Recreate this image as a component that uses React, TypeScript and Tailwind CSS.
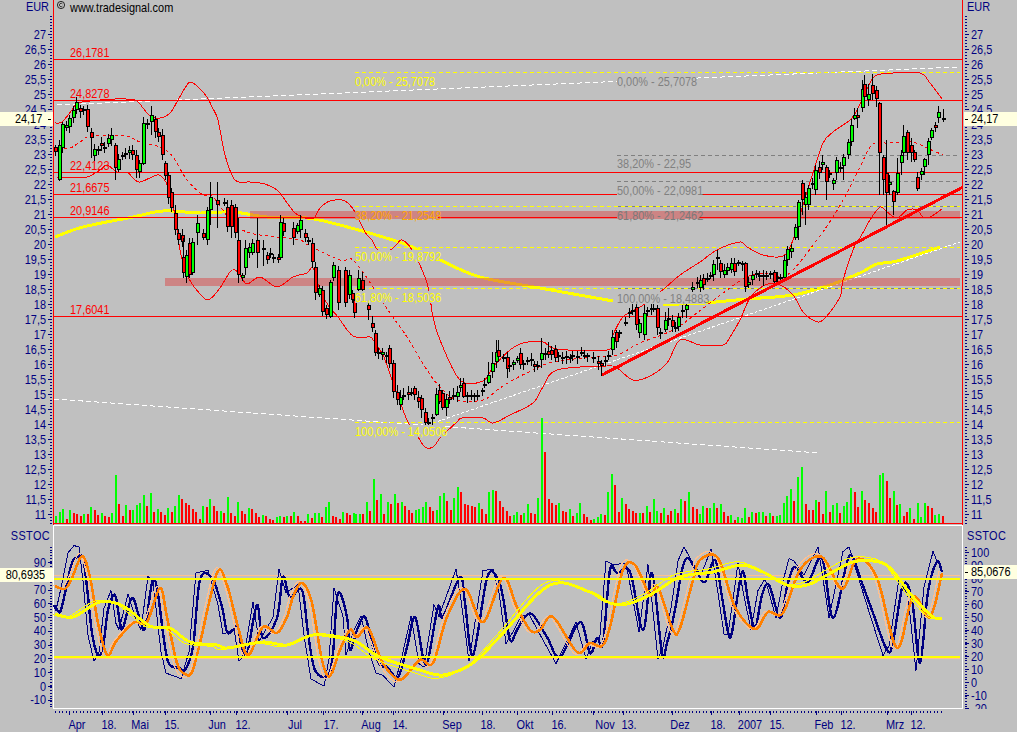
import React from "react";

const NAVY = "#000080";
const RED = "#ff0000";

// px position on the page, traced as x,y,x,y...
const upperBand = [55,123,62,122,72,110,78,103,100,100,115,99,135,100,143,108,150,116,160,118,170,113,178,100,185,88,190,82,197,86,207,97,212,107,218,120,225,155,235,180,250,182,265,184,277,190,285,200,295,213,305,218,314,218,320,208,330,201,345,201,355,212,365,232,372,240,378,250,390,250,397,244,402,240,412,250,427,283,433,317,440,340,460,380,483,381,493,367,510,350,523,343,543,342,557,349,607,350,612,337,623,317,640,307,646,303,665,288,680,275,700,262,717,250,740,242,747,247,763,255,783,256,793,240,803,205,813,173,823,143,833,132,850,120,857,110,870,83,877,75,893,73,920,73,930,83,942,99];
const lowerBand = [57,177,72,177,87,177,100,170,107,165,117,172,128,173,133,178,140,182,157,175,163,178,168,187,175,215,180,250,188,277,203,297,210,299,220,288,230,272,235,270,240,275,247,284,260,277,277,287,293,277,307,273,313,268,320,290,328,305,338,317,353,336,370,337,373,340,383,355,392,380,403,410,408,422,418,437,425,447,433,447,440,438,445,433,457,422,462,418,483,418,493,423,510,415,533,403,543,387,557,370,607,366,617,368,633,380,650,376,667,363,680,340,700,345,723,345,730,337,740,320,750,298,765,285,778,284,793,295,803,312,813,320,823,320,840,297,843,280,855,245,860,238,870,220,880,207,887,212,897,218,907,210,917,210,923,217,930,217,942,209];
const midBand = [58,148,70,148,80,142,90,136,110,136,127,136,140,142,160,147,173,157,187,180,203,195,213,197,233,223,250,233,277,237,300,240,308,245,340,260,353,260,373,287,390,313,407,337,427,370,440,387,457,400,483,400,497,390,513,380,533,370,553,362,593,357,617,355,640,343,673,330,697,313,723,293,747,277,767,273,780,277,793,270,817,240,833,217,847,193,860,167,870,147,877,143,887,143,900,142,913,142,927,148,943,155];
const maLine = [55,237,83,227,133,217,163,211,200,213,233,212,267,217,307,218,340,225,393,240,417,249,440,260,480,277,540,288,613,301];
const maLine2 = [663,304,680,304,705,303,747,299,793,295,830,285,860,273,877,264,897,261,940,247];

const navyThick = [55,605,60,612,65,593,72,563,78,557,83,558,87,587,92,633,98,655,103,647,108,610,115,595,120,623,123,628,132,598,140,620,145,628,152,583,157,588,165,647,170,665,180,668,185,670,193,647,200,580,212,578,222,607,227,632,233,630,238,627,243,655,248,650,257,605,263,638,277,618,283,577,290,597,302,590,308,633,315,670,328,676,333,653,338,593,347,617,350,650,357,630,365,617,373,647,380,665,387,667,398,677,407,647,415,617,423,657,428,660,438,607,443,617,460,577,465,603,473,655,487,578,497,577,503,597,510,640,517,630,525,617,533,615,547,637,560,657,580,622,590,653,597,638,603,643,610,570,617,573,630,572,643,630,652,573,662,653,667,643,675,610,682,570,688,558,697,572,705,582,715,560,722,597,728,632,732,632,742,572,748,600,755,628,762,595,769,585,780,618,787,587,793,568,798,570,808,582,822,558,833,618,847,562,853,558,862,583,873,613,887,650,893,642,903,585,912,600,920,663,928,592,937,562,942,572];
const orangeThick = [55,586,65,589,72,578,82,556,90,577,98,623,107,655,115,643,123,633,135,622,147,622,160,588,167,617,177,663,185,674,192,672,200,643,217,573,227,585,238,627,248,655,263,627,277,633,287,617,293,597,302,583,312,603,322,660,330,676,340,650,350,630,357,637,368,628,380,657,390,673,402,679,420,660,433,663,447,617,465,589,483,622,503,578,517,607,530,630,540,630,553,617,577,652,590,643,602,646,610,627,623,570,635,565,650,595,658,587,673,630,680,628,693,580,700,560,718,558,735,607,755,629,768,612,783,613,800,570,822,557,842,589,857,559,877,578,897,648,913,597,930,617,942,573];
const yellowThick = [55,614,73,617,100,602,123,606,150,626,170,628,190,642,217,645,227,648,263,642,287,645,313,635,340,637,357,642,380,657,420,670,443,675,473,663,503,633,550,585,590,592,610,603,627,604,650,595,680,577,713,572,742,565,763,572,787,585,807,585,827,575,853,562,873,561,890,568,913,597,933,617,942,618];

// x, body top, body bottom, 1 green / 0 red, optional wick top, wick bottom
type Candle = [number, number, number, number, number?, number?];
const candles: Candle[] = [
  [55,147,152,0],[59,145,180,1,140,181],[62,124,148,1],[66,125,128,1],[69,118,127,1],[73,110,118,1],[76,102,110,1],[80,108,112,0],[83,109,111,0],[87,109,127,0],[91,132,138,0,128,158],[94,149,156,1],[98,149,151,1],[101,143,146,0],[104,147,149,1],[108,138,144,1],[111,135,140,1,128,146],
  [115,145,168,0,143,180],[118,159,170,1],[122,155,157,0],[125,153,155,1],[129,150,153,1],[132,150,155,0],[136,155,170,0,150,178],[139,163,172,1,160,178],[143,123,164,1,117,165],[147,123,125,0],[151,115,122,1,106,135],[155,119,132,0],[158,132,137,0,128,142],[162,135,155,0],[165,163,176,0,161,180],[168,175,198,0],[171,192,208,0],[175,213,230,0,205,235],[178,233,240,0],[182,235,242,0],[183,257,273,0,238,278],[186,255,277,1,250,283],[189,243,275,0],[192,242,273,1,238,275],
  [197,223,233,1,215,245],[203,233,238,0],[207,210,240,1],[210,197,210,1,182,225],[217,200,205,0,182,228],[224,202,204,1,198,206],[227,207,227,0,200,232],[231,205,227,0,200,238],[235,207,233,0,204,238],[238,240,275,0,218,283],[242,275,278,1],[245,248,268,1,240,275],[249,247,253,1],[252,243,253,1],[257,240,253,0,218,268],[263,248,250,0,240,266],[267,255,260,0],[270,253,255,0,248,258],[273,257,259,1],[278,257,260,0],[280,222,258,1,215,260],[283,223,232,0],[293,228,238,0,222,245],[297,225,232,1],[300,220,230,1,215,238],[305,233,238,0],[308,240,242,0],[312,243,262,0,238,268],[315,267,293,0,262,300],[319,288,295,1],[322,290,312,0,286,316],[326,308,315,0],[330,282,317,1,280,318],[333,265,278,1],[338,270,303,0,266,310],
  [345,270,303,0],[349,275,295,1],[352,293,300,0],[354,300,313,0,296,318],[358,278,290,1,270,292],[362,280,290,0,272,294],[368,305,310,0,300,320],[372,323,328,0,316,332],[375,333,353,0,330,356],[378,352,354,1],[382,352,355,1],[386,355,357,0],[389,348,364,0,345,368],[393,363,392,0,360,398],[397,392,400,0,385,405],[400,397,405,1,390,410],[403,395,397,1,388,400],[408,392,395,0,386,400],[411,392,394,0,388,396],[414,388,395,0,386,400],[418,397,402,0],[421,398,410,0,395,418],[425,412,423,0,408,428],[428,422,424,1],[432,417,419,0],[436,394,415,1,388,416],[439,390,402,0,384,404],[442,393,408,0],[446,399,408,1,394,416],[449,397,400,0],[453,395,397,1,388,400],[457,392,397,1,386,402],[460,385,388,1,378,392],[463,383,397,0,378,398],[467,395,397,0],[471,395,397,1,390,400],[474,395,397,0],[477,395,397,1,390,400],[482,390,392,0,388,396],[484,384,386,1,378,388],
  [488,375,383,1,362,384],[492,363,372,1,352,378],[496,352,362,1,340,368],[498,350,357,0,340,360],[503,357,359,1],[507,357,369,0,352,378],[509,365,367,1],[513,362,365,1],[517,358,361,1],[520,353,365,0],[523,363,365,0],[527,360,362,1],[531,359,361,1],[534,364,367,0],[537,365,367,1],[541,353,360,1,338,368],[545,353,355,1],[548,351,355,0,342,358],[551,350,355,0],[555,349,358,0,345,362],[558,355,357,1],[562,357,359,0],[566,356,358,1],[570,357,359,0],[572,355,357,1],[577,356,358,1],[581,352,354,0],[584,355,357,0],[587,355,357,0],[593,357,359,1],[598,361,364,0],[601,363,366,0,360,376],[605,360,362,1],[608,355,357,1],[612,337,350,1,330,355],[616,332,342,0],[619,332,334,1],[625,322,324,0],[629,312,314,1],[632,310,312,0],[636,307,325,0,303,330],[639,323,333,1],[644,313,335,1,305,340],[647,310,312,0],[651,308,310,1],[653,308,310,1],[657,308,328,0,305,335],[660,332,334,0],[665,320,330,1,312,332],[668,318,320,0,308,326],[672,320,327,0],[675,327,329,1],[678,317,327,1],
  [682,310,312,0],[686,305,310,1,300,318],[692,287,290,1],[697,282,284,0],[700,280,288,1],[703,278,285,0],[707,278,280,1],[710,275,277,0],[713,264,275,1],[717,257,259,0,250,270],[720,263,272,0,260,278],[724,270,275,1],[727,267,271,1],[731,263,270,1],[734,263,272,0],[738,262,264,1],[742,263,265,1],[745,263,287,0,262,292],[748,282,285,1],[752,275,280,1],[756,273,275,0],[759,275,277,1],[763,275,277,0,270,286],[766,275,277,1],[770,273,275,0],[774,272,282,0,270,285],[777,277,279,0],[780,277,279,0],[784,260,278,1],[787,249,260,1],[791,248,252,1],[795,227,238,1,224,240],[798,202,227,1,200,240],[802,183,200,0,180,215],[805,197,205,1,192,225],[808,188,205,1,185,210],[812,183,185,0],[815,170,190,1,165,195],[819,167,173,0],[822,162,165,1,155,170],[826,167,182,0,165,200],[829,173,175,0],[833,180,184,1,178,190],[836,160,173,1,157,180],[840,167,169,1],[843,157,166,1,154,180],[848,142,155,1],[851,125,142,1],[854,115,119,1,108,120],[857,115,118,0,108,128],[862,89,108,1,80,112],[864,84,97,0,75,105],[868,94,100,1,84,106],[872,85,94,0,74,100],[876,90,99,0,86,107],[879,103,153,0,102,195],[883,157,180,0,155,195],[886,173,193,0,140,225],[889,182,185,1,175,195],[893,191,202,0,190,215],[897,173,193,1,158,195],[901,155,163,1,150,175],[903,136,153,1,125,158],[907,132,153,0,130,160],[911,145,153,0,138,162],[914,152,160,0,150,162],[917,177,189,0,172,191],[921,171,175,1,168,180],[924,159,167,1,158,175],[928,141,155,1,138,165],[931,130,138,1,128,140],[935,125,128,0,122,132],[938,112,118,1,106,123],[943,118,119,0,109,122],
];

// volume heights read off the crops, in crop units (3 = 1px); negative is a red bar
const volA = [21,33,42,-12,39,-30,-27,-21,27,-27,48,-39,-24,30,-21,-18,30,144,-57,-21,54,-39,39,54,60,84,-51,90,-33,42,-33,-24,45,-33,51,84,-72,-60,-54,-42,-33,-12,51,-48,72,-51,-36,36,-30,78,-30,-21,63,-36,-27,45,-42,-30,-18,24,-21,-12,-9,18,21,-18,21,-21,33,-21,-6,-6,27,-15,30,30,-18,48,63,-21,-18,-12,33,-30,-24,30];
const volB = [27,27,-27,63,-36,132,-69,87,-27,63,-57,87,-60,63,-51,-39,-30,39,42,48,63,-48,-36,39,81,90,-66,-39,75,108,-93,-57,-54,-51,-48,60,-42,-27,93,99,-96,-66,-48,-36,-21,24,33,-24,30,57,-30,-27,75,315,-213,-72,-60,-54,60,-36,-33,42,-21,30,60,-27,-18,-9,12,18,27,-24,93,147,-114,-33,75,-57,-42,-36,-30,30,-30,51,-33,72];
// crop x (from 680), height in px
const volC: [number, number][] = [[0,24],[13,-22],[25,31],[36,-16],[47,-14],[57,9],[67,17],[77,-15],[88,15],[98,20],[108,-15],[119,19],[130,-11],[140,-7],[150,8],[161,-3],[171,6],[182,5],[192,15],[203,-6],[213,11],[224,-10],[234,11],[245,11],[256,-7],[266,10],[277,-7],[287,7],[297,8],[308,20],[318,27],[330,34],[340,-22],[352,46],[362,56],[374,-19],[385,-13],[395,-13],[404,23],[415,-21],[426,-9],[436,32],[447,-11],[457,18],[467,20],[478,-10],[488,17],[498,21],[510,35],[522,-31],[532,-16],[543,32],[553,-23],[563,-20],[575,-15],[586,-11],[597,48],[607,50],[618,-42],[628,-25],[638,32],[648,-18],[658,19],[668,-7],[678,-11],[688,15],[699,-4],[710,20],[720,6],[732,20],[742,-17],[753,-15],[763,8],[773,9],[785,-7]];
const bars = [
  ...volA.map((h, i) => ({ x: 55 + i * 3.5, h: h / 3 })),
  ...volB.map((h, i) => ({ x: 355 + i * 3.5, h: h / 3 })),
  ...[12, -10, 15, -8, -12, 14, -10].map((h, i) => ({ x: 656 + i * 3.5, h })),
  ...volC.map(([z, h]) => ({ x: 680 + z / 3, h })),
];

const hash = (i: number) => {
  const s = Math.sin(i * 12.9898) * 43758.5453;
  return s - Math.floor(s);
};

const points = (p: number[], dx: number, gain: number, mid: number) => {
  const pts: [number, number][] = [];
  for (let i = 0; i < p.length; i += 2) pts.push([p[i] + dx, mid + (p[i + 1] - mid) * gain]);
  return pts;
};

// catmull-rom through the traced points
const curve = (p: number[], dx = 0, gain = 1, mid = 620) => {
  const pts = points(p, dx, gain, mid);
  let d = `M${pts[0][0]} ${pts[0][1]}`;
  for (let i = 0; i < pts.length - 1; i++) {
    const a = pts[Math.max(i - 1, 0)];
    const b = pts[i];
    const c = pts[i + 1];
    const e = pts[Math.min(i + 2, pts.length - 1)];
    d += `C${b[0] + (c[0] - a[0]) / 6} ${b[1] + (c[1] - a[1]) / 6} ${c[0] - (e[0] - b[0]) / 6} ${c[1] - (e[1] - b[1]) / 6} ${c[0]} ${c[1]}`;
  }
  return d;
};

const jagged = (p: number[], dx = 0, gain = 1, mid = 620) =>
  points(p, dx, gain, mid)
    .map(([x, y], i) => `${i ? "L" : "M"}${x} ${y}`)
    .join("");

function Label({
  x,
  y,
  children,
  color = NAVY,
  anchor = "start",
  spacing,
}: {
  x: number;
  y: number;
  children: React.ReactNode;
  color?: string;
  anchor?: "start" | "end" | "middle";
  spacing?: number;
}) {
  return (
    <text
      transform={`translate(${x} ${y + 4.5}) scale(.875 1)`}
      textAnchor={anchor}
      fill={color}
      fontSize={12.5}
      letterSpacing={spacing}
    >
      {children}
    </text>
  );
}

// fib labels blank out whatever runs behind them
function FibLabel({ x, y, w, color, text, bg = "#c0c0c0" }: { x: number; y: number; w: number; color: string; text: string; bg?: string }) {
  return (
    <g>
      <rect x={x} y={bg === "#c0c0c0" ? y - 6 : y - 4} width={w} height={bg === "#c0c0c0" ? 12 : 8} fill={bg} />
      <Label x={x} y={y} color={color}>
        {text}
      </Label>
    </g>
  );
}

const priceTicks = Array.from({ length: 33 }, (_, i) => 27 - i * 0.5);
const fmt = (n: number) => String(n).replace(".", ",");

function PriceAxis({ side }: { side: "left" | "right" }) {
  const left = side === "left";
  const dots = Array.from({ length: 170 }, (_, i) => 16 + i * 3);
  return (
    <svg viewBox={left ? "0 0 53 525" : "963 0 54 525"} className="block w-full h-full">
      <g shapeRendering="crispEdges" fill={NAVY}>
        {dots.map((y) => (
          <rect key={y} x={left ? 50 : 965} y={y} width={2} height={1} />
        ))}
        {priceTicks.map((p) => (
          <rect key={p} x={left ? 48 : 965} y={34 + (27 - p) * 30} width={4} height={1} />
        ))}
      </g>
      <Label x={left ? 49 : 967} y={6.5} anchor={left ? "end" : "start"}>
        EUR
      </Label>
      {priceTicks.map((p) => (
        <Label key={p} x={left ? 46 : 971} y={34 + (27 - p) * 30} anchor={left ? "end" : "start"}>
          {fmt(p)}
        </Label>
      ))}
    </svg>
  );
}

function MainChart() {
  const hLines = [59, 100, 172, 194, 217, 316];
  const yellowFib = [72.5, 206.5, 247.5, 288.5, 422.5];
  const grayFib = [155.5, 181.5, 206.5, 288.5];
  return (
    <svg viewBox="53 0 910 525" className="block w-full h-full">
      <g shapeRendering="crispEdges">
        <path d="M57 105L960 67" stroke="#fff" strokeDasharray="5 3" fill="none" />
        <path d="M54 399L820 453" stroke="#fff" strokeDasharray="5 3" fill="none" />
        <path d="M433 423L960 242" stroke="#fff" strokeDasharray="3 2" fill="none" />
        <path d={curve(maLine, 0, 1, 0)} stroke="#ffff00" strokeWidth={3} fill="none" />
        <path d={curve(maLine2, 0, 1, 0)} stroke="#ffff00" strokeWidth={3} fill="none" />
        <rect x={250} y={211} width={710} height={8} fill="#da4848" fillOpacity={0.5} />
        <rect x={165} y={278} width={795} height={8} fill="#da4848" fillOpacity={0.5} />
        {grayFib.map((y) => (
          <path key={y} d={`M617 ${y}L960 ${y}`} stroke="#808080" strokeDasharray="4 3" />
        ))}
        {yellowFib.map((y) => (
          <path key={y} d={`M355 ${y}L960 ${y}`} stroke="#ffff00" strokeDasharray="4 3" />
        ))}
        {hLines.map((y) => (
          <rect key={y} x={53} y={y} width={910} height={1} fill={RED} />
        ))}
        <path d={curve(upperBand, 0, 1, 0)} stroke={RED} fill="none" />
        <path d={curve(lowerBand, 0, 1, 0)} stroke={RED} fill="none" />
        <path d={curve(midBand, 0, 1, 0)} stroke={RED} strokeDasharray="3 3" fill="none" />
        {bars.map((b) => {
          const h = Math.max(Math.round(Math.abs(b.h)), 1);
          return <rect key={b.x} x={Math.round(b.x)} y={523 - h} width={2} height={h} fill={b.h > 0 ? "#00ff00" : RED} />;
        })}
        <rect x={53} y={523} width={910} height={1} fill={RED} />
        {candles.map(([x, top, bottom, up, wt, wb], i) => {
          const hi = wt ?? top - 2 - Math.round(hash(i) * 4);
          const lo = wb ?? bottom + 2 + Math.round(hash(i + 9) * 4);
          return (
            <g key={x}>
              <rect x={x} y={hi} width={1} height={lo - hi} fill="#000" />
              <rect x={x - 1} y={top} width={4} height={Math.max(bottom - top, 2)} fill="#000" />
              {bottom - top > 2 && <rect x={x} y={top + 1} width={2} height={bottom - top - 2} fill={up ? "#00ff00" : RED} />}
            </g>
          );
        })}
        <path d="M602 375L963 187" stroke={RED} strokeWidth={3} />
        <rect x={53} y={0} width={1} height={525} fill={RED} />
        <rect x={962} y={0} width={1} height={525} fill={RED} />
      </g>

      <circle cx={61} cy={5} r={3.6} fill="none" stroke="#000" strokeWidth={0.8} />
      <path d="M62.4 3.9a1.7 1.7 0 1 0 0 2.2" fill="none" stroke="#000" strokeWidth={0.7} />
      <Label x={70} y={7} color="#000">
        www.tradesignal.com
      </Label>

      <Label x={70} y={52} color={RED}>26,1781</Label>
      <Label x={70} y={93} color={RED}>24,8278</Label>
      <Label x={70} y={165} color={RED}>22,4123</Label>
      <Label x={70} y={187} color={RED}>21,6675</Label>
      <Label x={70} y={210} color={RED}>20,9146</Label>
      <Label x={70} y={309} color={RED}>17,6041</Label>

      <FibLabel x={355} y={81} w={83} color="#ffff00" text="0,00% - 25,7078" />
      <FibLabel x={355} y={215} w={83} color="#ffa800" bg="#cd8484" text="38,20% - 21,2548" />
      <FibLabel x={355} y={256} w={84} color="#ffff00" text="50,00% - 19,8792" />
      <FibLabel x={355} y={297} w={84} color="#ffff00" text="61,80% - 18,5036" />
      <FibLabel x={355} y={431} w={90} color="#ffff00" text="100,00% - 14,0506" />

      <FibLabel x={617} y={81} w={78} color="#808080" text="0,00% - 25,7078" />
      <FibLabel x={617} y={163} w={72} color="#808080" text="38,20% - 22,95" />
      <FibLabel x={617} y={190} w={83} color="#808080" text="50,00% - 22,0981" />
      <FibLabel x={617} y={215} w={82} color="#7a7a7a" bg="#cd8484" text="61,80% - 21,2462" />
      <FibLabel x={617} y={298} w={89} color="#808080" text="100,00% - 18,4883" />
    </svg>
  );
}

function StochAxis({ side }: { side: "left" | "right" }) {
  const left = side === "left";
  const zero = left ? 686 : 682.3;
  const step = left ? 13.77 : 13;
  const vals = left ? [90, 80, 70, 60, 50, 40, 30, 20, 10, 0, -10] : [100, 90, 80, 70, 60, 50, 40, 30, 20, 10, 0, -10, -20];
  const dots = Array.from({ length: 60 }, (_, i) => 547 + i * 2.7);
  return (
    <svg viewBox={left ? "0 525 53 184" : "963 525 54 184"} className="block w-full h-full">
      <g shapeRendering="crispEdges" fill={NAVY}>
        {dots.map((y) => (
          <rect key={y} x={left ? 50 : 965} y={Math.round(y)} width={2} height={1} />
        ))}
        {vals.map((v) => (
          <rect key={v} x={left ? 48 : 965} y={Math.round(zero - v * (step / 10))} width={4} height={1} />
        ))}
      </g>
      <Label x={left ? 50 : 967} y={535} anchor={left ? "end" : "start"} spacing={0.4}>
        SSTOC
      </Label>
      {vals.map((v) => (
        <Label key={v} x={left ? 46 : 971} y={zero - v * (step / 10)} anchor={left ? "end" : "start"}>
          {v}
        </Label>
      ))}
    </svg>
  );
}

function StochChart() {
  return (
    <svg viewBox="53 525 910 184" className="block w-full h-full">
      <g shapeRendering="crispEdges" fill="none">
        <rect x={53} y={525} width={910} height={1} fill="#fff" />
        <rect x={53} y={708} width={910} height={1} fill="#fff" />
        <rect x={53} y={525} width={1} height={184} fill="#fff" />
        <rect x={962} y={525} width={1} height={184} fill="#fff" />
        <rect x={54} y={575} width={906} height={1} fill="#ffc090" />
        <rect x={54} y={658} width={906} height={1} fill="#ffc090" />
        <path d={jagged(navyThick, -4, 1.18)} stroke={NAVY} />
        <path d={curve(navyThick)} stroke={NAVY} strokeWidth={2.4} />
        <path d={curve(orangeThick, -3, 1.04)} stroke="#ffc090" strokeWidth={1.2} />
        <path d={curve(orangeThick)} stroke="#ff8000" strokeWidth={2.6} />
        <rect x={54} y={578} width={906} height={1.5} fill="#ffff00" />
        <rect x={54} y={656} width={906} height={1.5} fill="#ffff00" />
        <path d={curve(yellowThick, -5, 1.06)} stroke="#ffff00" />
        <path d={curve(yellowThick)} stroke="#ffff00" strokeWidth={3} />
      </g>
    </svg>
  );
}

const monthTicks = [69, 102, 133, 165, 210, 236, 287, 323, 362, 393, 443, 482, 517, 552, 593, 623, 672, 711, 739, 770, 816, 841, 887, 911];
const timeLabels: [string, number][] = [
  ["Apr", 77], ["18.", 109], ["Mai", 140], ["15.", 172], ["Jun", 217], ["12.", 243], ["Jul", 295], ["17.", 331],
  ["Aug", 371], ["14.", 400], ["Sep", 452], ["18.", 488], ["Okt", 525], ["16.", 559], ["Nov", 605], ["13.", 629],
  ["Dez", 680], ["18.", 718], ["2007", 750], ["15.", 777], ["Feb", 824], ["12.", 848], ["Mrz", 895], ["12.", 918],
];

function TimeAxis() {
  return (
    <svg viewBox="0 709 1017 23" className="block w-full h-full">
      <g shapeRendering="crispEdges" fill={NAVY}>
        {Array.from({ length: 254 }, (_, i) => 55 + i * 3.5).map((x) => (
          <rect key={x} x={Math.round(x)} y={711} width={1} height={2} />
        ))}
        {monthTicks.map((x) => (
          <rect key={x} x={x} y={711} width={1} height={4} />
        ))}
      </g>
      {timeLabels.map(([t, x]) => (
        <Label key={`${t}${x}`} x={x} y={724.5} anchor="middle">
          {t}
        </Label>
      ))}
    </svg>
  );
}

function ValueTag({ value, side, className }: { value: string; side: "left" | "right"; className: string }) {
  const left = side === "left";
  return (
    <div className={`absolute flex h-[14px] items-center bg-[#ffffe0] text-[12.5px] leading-none text-black ${className} ${left ? "left-0 w-[53px] justify-end pr-[2px]" : "right-0 w-[53px] justify-start pl-[1px]"}`}>
      {!left && <span className="mr-[3px] h-px w-[3px] bg-black" />}
      <span className={`inline-block scale-x-[.875] ${left ? "origin-right" : "origin-left"}`}>{value}</span>
      {left && <span className="ml-[6px] h-px w-[3px] bg-black" />}
    </div>
  );
}

export default function App() {
  return (
    <div className="flex h-[732px] w-[1017px] flex-col overflow-hidden bg-[#c0c0c0] font-['Liberation_Sans',Arial,sans-serif]">
      <div className="flex h-[525px]">
        <div className="relative w-[53px]">
          <PriceAxis side="left" />
          <ValueTag side="left" value="24,17" className="top-[112px]" />
        </div>
        <div className="w-[910px]">
          <MainChart />
        </div>
        <div className="relative w-[54px]">
          <PriceAxis side="right" />
          <ValueTag side="right" value="24,17" className="top-[112px]" />
        </div>
      </div>
      <div className="flex h-[184px]">
        <div className="relative w-[53px]">
          <StochAxis side="left" />
          <ValueTag side="left" value="80,6935" className="top-[43px]" />
        </div>
        <div className="w-[910px]">
          <StochChart />
        </div>
        <div className="relative w-[54px]">
          <StochAxis side="right" />
          <ValueTag side="right" value="85,0676" className="top-[40px]" />
        </div>
      </div>
      <div className="h-[23px]">
        <TimeAxis />
      </div>
    </div>
  );
}
